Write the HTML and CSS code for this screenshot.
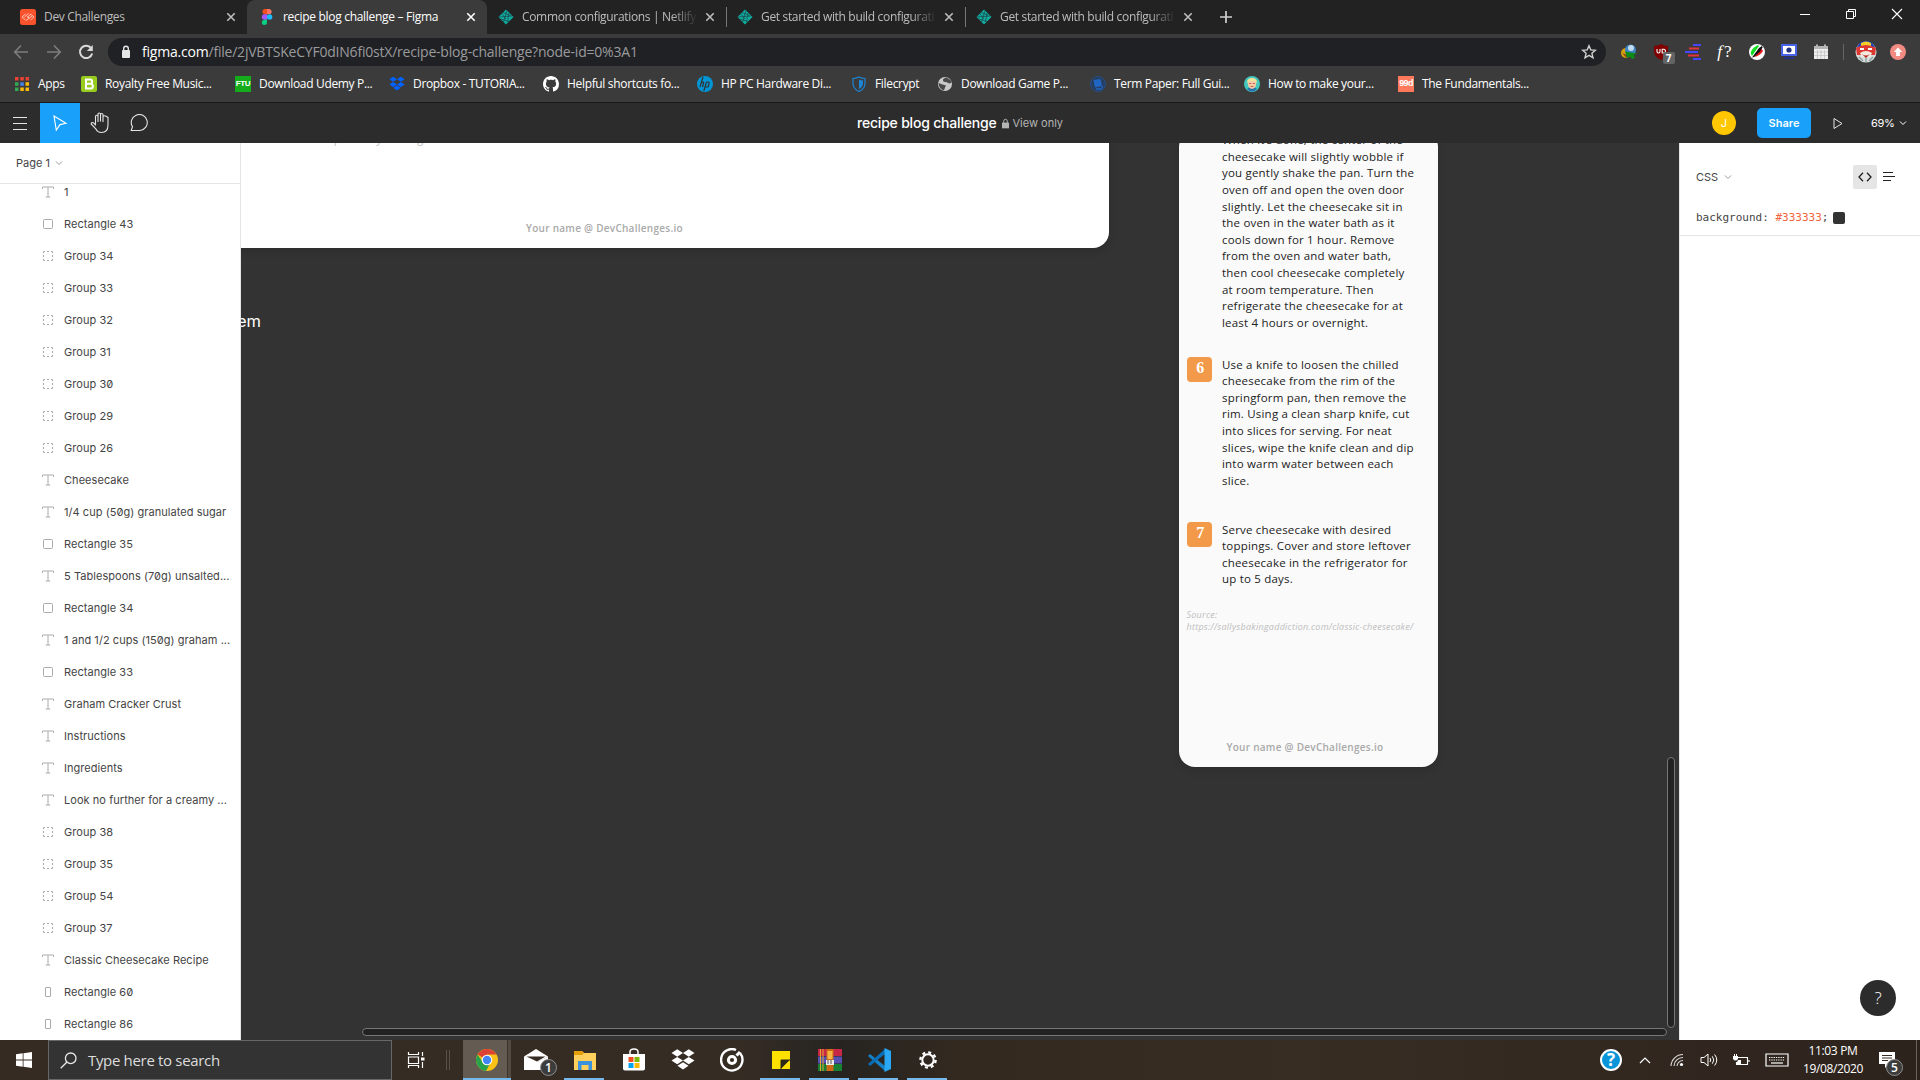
FILE: index.html
```html
<!DOCTYPE html>
<html lang="en">
<head>
<meta charset="utf-8">
<title>recipe blog challenge – Figma</title>
<link rel="stylesheet" href="styles.css">
</head>
<body>
<svg class="defs" aria-hidden="true">
  <symbol id="i-text" viewBox="0 0 12 12"><path d="M.5 3V1h11v2M6 1v10M3.700 11h4.600" fill="none" stroke="#aaa"/></symbol>
  <symbol id="i-rect" viewBox="0 0 12 12"><rect x="1.5" y="1.5" width="9" height="9" rx="1" fill="none" stroke="#aaa"/></symbol>
  <symbol id="i-tall" viewBox="0 0 12 12"><rect x="3.5" y="1.5" width="5" height="9" rx=".5" fill="none" stroke="#aaa"/></symbol>
  <symbol id="i-group" viewBox="0 0 12 12"><path d="M1.500 3V1.500H3M5 1.500h2M9 1.500h1.500V3M10.500 5v2M10.500 9v1.500H9M7 10.500H5M3 10.500H1.500V9M1.500 7V5" fill="none" stroke="#aaa"/></symbol>
  <symbol id="i-chev" viewBox="0 0 8 6"><path d="M1 1.500l3 3 3-3" fill="none" stroke="currentColor"/></symbol>
  <symbol id="i-x" viewBox="0 0 10 10"><path d="M1.300 1.300l7.400 7.400M8.700 1.300L1.300 8.700" stroke="currentColor" stroke-width="1.600"/></symbol>
  <symbol id="i-netlify" viewBox="0 0 16 16"><path d="M8 .5L15.500 8 8 15.500.5 8z" fill="#0fada1"/><path d="M5 3.500l7.500 3M1 8l13-1M3 10l8 2.500M9 1.500L5.500 13M11 4l-1.500 9M4 5l4 5" stroke="#1c4b4d" stroke-width=".8" fill="none"/></symbol>
  <symbol id="i-dropbox" viewBox="0 0 20 18"><path d="M5.200 0l4.800 3.100-4.800 3.100L.4 3.100zM14.800 0l4.800 3.100-4.800 3.100L10 3.100zM5.200 6.400L10 9.500l-4.800 3.100L.4 9.500zM14.800 6.400l4.800 3.100-4.800 3.100L10 9.500zM10 10.800l4.600 3L10 17l-4.600-3.200z" fill="currentColor"/></symbol>
</svg>

<header class="tabs">
  <div class="tab first">
    <svg class="ico" viewBox="0 0 16 16"><rect width="16" height="16" rx="2.500" fill="#f9532d"/><path d="M5.500 5L2 8l3.500 3M10.500 5L14 8l-3.500 3M4.500 8l4-3.500M7 8.500l4-3.500M6 11.500L12 7M7.500 7.500l2 2" fill="none" stroke="#ffc5b4"/></svg>
    <span class="tab-title">Dev Challenges</span><svg class="x"><use href="#i-x"/></svg>
  </div>
  <div class="tab active">
    <svg class="ico fig" viewBox="0 0 12 16"><path d="M6 0H3.500a2.700 2.700 0 000 5.300H6z" fill="#f24e1e"/><path d="M6 0h2.500a2.700 2.700 0 010 5.300H6z" fill="#ff7262"/><path d="M6 5.300H3.500a2.700 2.700 0 000 5.400H6z" fill="#a259ff"/><circle cx="8.600" cy="8" r="2.700" fill="#1abcfe"/><path d="M6 10.700H3.500A2.600 2.600 0 106 13.300z" fill="#0acf83"/></svg>
    <span class="tab-title">recipe blog challenge – Figma</span><svg class="x"><use href="#i-x"/></svg>
  </div>
  <div class="tab"><svg class="ico"><use href="#i-netlify"/></svg><span class="tab-title fade">Common configurations | Netlify</span><svg class="x"><use href="#i-x"/></svg></div>
  <div class="tab sep"><svg class="ico"><use href="#i-netlify"/></svg><span class="tab-title fade">Get started with build configurati</span><svg class="x"><use href="#i-x"/></svg></div>
  <div class="tab sep"><svg class="ico"><use href="#i-netlify"/></svg><span class="tab-title fade">Get started with build configurati</span><svg class="x"><use href="#i-x"/></svg></div>
  <svg class="plus" viewBox="0 0 12 12"><path d="M6 0v12M0 6h12" stroke="#d0d0d0" stroke-width="1.700"/></svg>
  <div class="winctl">
    <svg viewBox="0 0 12 12"><path d="M1 6.500h10" stroke="#fff"/></svg>
    <svg viewBox="0 0 12 12"><path d="M1.500 3.500h7v7h-7zM3.500 3V1.500h7v7H9" fill="none" stroke="#fff"/></svg>
    <svg viewBox="0 0 12 12"><path d="M1 1l10 10M11 1L1 11" stroke="#fff" stroke-width="1.100"/></svg>
  </div>
</header>

<nav class="toolbar">
  <svg class="nav" viewBox="0 0 16 16"><path d="M15 8H2M8 1.500L1.700 8 8 14.500" fill="none" stroke="#7d7d7d" stroke-width="1.600"/></svg>
  <svg class="nav" viewBox="0 0 16 16"><path d="M1 8h13M8 1.500L14.300 8 8 14.500" fill="none" stroke="#7d7d7d" stroke-width="1.600"/></svg>
  <svg class="nav" viewBox="0 0 16 16"><path d="M13.300 4.300A6.200 6.200 0 1014.200 9.500" fill="none" stroke="#d8d8d8" stroke-width="2"/><path d="M14.800 1v6H8.800z" fill="#d8d8d8"/></svg>
  <div class="omni">
    <svg class="lock" viewBox="0 0 10 14"><rect x="1" y="5" width="8" height="8" rx="1" fill="#e6e6e6"/><path d="M2.700 6V3.600a2.300 2.300 0 014.600 0V6" fill="none" stroke="#e6e6e6" stroke-width="1.400"/></svg>
    <span class="url"><b>figma.com</b>/file/2jVBTSKeCYF0dIN6fi0stX/recipe-blog-challenge?node-id=0%3A1</span>
    <svg class="star" viewBox="0 0 16 16"><path d="M8 1.700l1.800 4.200 4.600.4-3.500 3 1.100 4.500L8 11.400l-4 2.400 1.100-4.500-3.500-3 4.600-.4z" fill="none" stroke="#d0d0d0" stroke-width="1.400"/></svg>
  </div>
  <div class="exts">
    <svg viewBox="0 0 18 18"><ellipse cx="6" cy="10" rx="5" ry="5" fill="#d9a20c"/><circle cx="10.500" cy="7" r="5.500" fill="#3e83c4"/><circle cx="11" cy="5" r="3" fill="#c3dcf0"/><path d="M2 9q3 6 7 6l-2-3q-4-1-5-3z" fill="#8c3c20"/><path d="M5 8.500l12 2-3.500 1.500 1.500 3-3 1-2-2.500L7 15z" fill="#0c8d17"/></svg>
    <div class="badged"><svg viewBox="0 0 18 18"><path d="M9 1q3 2 7 2v5q0 6-7 9-7-3-7-9V3q4 0 7-2z" fill="#800000"/><path d="M5 6v2.500q0 1.500 1.500 1.500T8 8.500V6M10.200 6.200H12q1.500.3 1.500 1.900T12 10h-1.800z" fill="none" stroke="#fff" stroke-width="1.100"/></svg><span class="badge">7</span></div>
    <svg viewBox="0 0 18 18"><path d="M9 2h8M1 9h13M9 16h8" stroke="#4646ff" stroke-width="2"/><path d="M5 5.500h10M7 9M4 12.500h11" stroke="#e2333e" stroke-width="2"/></svg>
    <span class="fq"><i>f</i>?</span>
    <svg viewBox="0 0 18 18"><circle cx="9" cy="9" r="8" fill="#fff"/><path d="M3 11q-1-5 7-9l1 1-7 10z" fill="#12dd22"/><path d="M6 14l7-9 2 3q-3 5-9 6z" fill="#ed1a1a"/><path d="M4 14.500l7-9.500 3-2 .5 1.500-2.500 4L6 14z" fill="#111"/></svg>
    <svg viewBox="0 0 18 18"><rect x="2" y="2" width="14" height="10" fill="#fff" stroke="#4863e8" stroke-width="2"/><circle cx="9" cy="7" r="2.600" fill="#203080"/><path d="M4 14h10v2H4z" fill="#24348a"/></svg>
    <svg viewBox="0 0 18 18"><path d="M2 3h14v13H2z" fill="#eee"/><path d="M2 3h14v3H2zM4 1.500h2V4H4zM12 1.500h2V4h-2z" fill="#b5b5b5"/><path d="M2 9h14M2 12.500h14M5.500 7v9M9 7v9M12.500 7v9" stroke="#c4c4c4" stroke-width=".8"/></svg>
  </div>
  <i class="tb-sep"></i>
  <svg class="face" viewBox="0 0 22 22"><circle cx="11" cy="11" r="10.500" fill="#d8dcda"/><path d="M2 8Q3 0 11 0t9 8z" fill="#2445ba"/><path d="M6 2q5-3 10 0v3H6z" fill="#f5cf29"/><path d="M1 7q10-6 20 0l-1 7H2z" fill="#dd3832"/><path d="M5 7h4v2H5zM13 7h4v2h-4z" fill="#fff"/><path d="M5 12q6-4 12 0l-2 4H7z" fill="#f5e8df"/><path d="M7 13q4 3 8 0l-4 4z" fill="#b5221f"/><path d="M4 16l4 4M18 16l-4 4M11 17v4" stroke="#7c9b9b" stroke-width="1.200"/></svg>
  <svg class="upd" viewBox="0 0 16 16"><circle cx="8" cy="8" r="8" fill="#f28b82"/><path d="M8 3.500L12.300 8H9.900v4H6.100V8H3.700z" fill="#fff"/></svg>
</nav>

<nav class="bookmarks">
  <a class="apps-link"><svg class="ico" viewBox="0 0 16 16"><path d="M1 1h3.500v3.500H1zM6.300 1h3.500v3.500H6.300zM11.500 1H15v3.500h-3.500z" fill="#ea4335"/><path d="M1 6.300h3.500v3.500H1z" fill="#34a853"/><path d="M6.300 6.300h3.500v3.500H6.300z" fill="#4285f4"/><path d="M11.500 6.300H15v3.500h-3.500zM11.500 11.500H15V15h-3.500zM6.300 11.500h3.500V15H6.300z" fill="#fbbc05"/><path d="M1 11.500h3.500V15H1z" fill="#34a853"/></svg>Apps</a>
  <a><svg class="ico" viewBox="0 0 16 16"><rect width="16" height="16" rx="2" fill="#97cb1c"/><path d="M5 3.500h4a2 2 0 010 4.300H5zM5 7.800h4.500a2.300 2.300 0 010 4.700H5z" fill="none" stroke="#fff" stroke-width="2"/></svg>Royalty Free Music...</a>
  <a><span class="ico ftu">FTU</span>Download Udemy P...</a>
  <a><svg class="ico dbx"><use href="#i-dropbox"/></svg>Dropbox - TUTORIA...</a>
  <a><svg class="ico" viewBox="0 0 16 16"><path fill="#fff" d="M8 0C3.580 0 0 3.580 0 8c0 3.540 2.290 6.530 5.470 7.590.4.070.55-.17.55-.38 0-.19-.01-.82-.01-1.490-2.010.37-2.530-.49-2.690-.94-.09-.23-.48-.94-.82-1.130-.28-.15-.68-.52-.01-.53.63-.01 1.080.58 1.230.82.72 1.210 1.870.87 2.330.66.07-.52.28-.87.51-1.070-1.780-.2-3.640-.89-3.640-3.950 0-.87.31-1.590.82-2.150-.08-.2-.36-1.020.08-2.120 0 0 .67-.21 2.200.82.64-.18 1.320-.27 2-.27s1.360.09 2 .27c1.530-1.040 2.200-.82 2.200-.82.44 1.100.16 1.920.08 2.120.51.56.82 1.270.82 2.150 0 3.070-1.870 3.750-3.650 3.950.29.25.54.73.54 1.480 0 1.070-.01 1.930-.01 2.200 0 .21.15.46.55.38A8.010 8.010 0 0016 8c0-4.420-3.580-8-8-8z"/></svg>Helpful shortcuts fo...</a>
  <a><svg class="ico" viewBox="0 0 16 16"><circle cx="8" cy="8" r="8" fill="#0096d6"/><path d="M6 1L3 11M3.800 7.500Q7 4.500 6.500 7.500L5.500 11M9.500 6L6.800 15M9.500 6h2q1 0 .5 2t-1 3H8.300" fill="none" stroke="#333" stroke-width="1.200"/></svg>HP PC Hardware Di...</a>
  <a><svg class="ico" viewBox="0 0 16 16"><path d="M8 1q3 1.500 6 1.500V7q0 6-6 8.500Q2 13 2 7V2.500Q5 2.500 8 1z" fill="none" stroke="#1c85d6" stroke-width="1.200"/><path d="M8 3.500q2 1 4 1V7q0 4-4 6z" fill="#1c85d6"/></svg>Filecrypt</a>
  <a><svg class="ico" viewBox="0 0 16 16"><circle cx="8" cy="8" r="7" fill="#c9c9c9"/><path d="M9.500 1.500q-4 1-3.500 3t3 1.500l3.500 1.500q2.500-.5 2-2T9.500 1.500zM1.500 7l4 1.500 3.500 1-1 2-1 3Q2 13 1.500 7z" fill="#4a4a4a"/></svg>Download Game P...</a>
  <a><svg class="ico" viewBox="0 0 16 16"><circle cx="8" cy="8" r="7.500" fill="#263f61" stroke="#235494" stroke-width=".8"/><path d="M3.500 4l7-1 1.500 7-7 1.500z" fill="#2165c5"/><path d="M6 13h5l2-3" fill="none" stroke="#2165c5" stroke-width="1.300"/></svg>Term Paper: Full Gui...</a>
  <a><svg class="ico" viewBox="0 0 16 16"><circle cx="8" cy="8" r="8" fill="#42c7be"/><path d="M3 13q5-5 10 0-5 5-10 0z" fill="#2772ae"/><ellipse cx="8" cy="7.500" rx="4.200" ry="5.300" fill="#f4c9a8"/><path d="M3 7q0-5 5-5t5 5l-3-2H6z" fill="#efe29b"/><path d="M5 7.500h2.300M8.700 7.500H11M6.500 10.500h3" stroke="#c36c53"/></svg>How to make your...</a>
  <a><span class="ico nnd">99d</span>The Fundamentals...</a>
</nav>

<div class="figbar">
  <div class="tools">
    <svg class="burger" viewBox="0 0 14 14"><path d="M0 1.500h14M0 7.500h14M0 13.500h14" stroke="#e5e5e5"/></svg>
    <div class="move"><svg viewBox="0 0 16 16"><path d="M2 1l12 7.300-6 1.300L4.300 15z" fill="none" stroke="#fff" stroke-width="1.100"/></svg></div>
    <svg class="hand" viewBox="0 0 20 22"><path d="M5.500 12.500V4.500q0-1.200 1.200-1.200T8 4.500V10M8 9.500V2.200Q8 1 9.200 1t1.300 1.200V9.500M10.500 9V2.700q0-1.200 1.200-1.200T13 2.700V10M13 9.500V5q0-1.200 1.500-1.200T18 5.500V13q0 7.500-6.500 7.500-4 0-5.500-3.500L1.500 12.500q-.8-1 .3-1.800 1-.6 2 .5l2 2.300" fill="none" stroke="#e5e5e5" stroke-width="1.100"/></svg>
    <svg class="comment" viewBox="0 0 18 18"><path d="M1 17L2.500 12.800A8 8 0 1110 16.500H1.200" fill="none" stroke="#e5e5e5" stroke-width="1.100"/></svg>
  </div>
  <div class="file"><span class="fname">recipe blog challenge</span><svg viewBox="0 0 8 12"><rect y="5" width="8" height="6.500" fill="#b5b5b5"/><path d="M2 5.500V3.200a2 2 0 014 0v2.300" fill="none" stroke="#b5b5b5" stroke-width="1.100"/></svg><span class="view">View only</span></div>
  <div class="figright">
    <span class="avatar">J</span><span class="share">Share</span>
    <svg class="play" viewBox="0 0 10 12"><path d="M1 1l8 5-8 5z" fill="none" stroke="#e5e5e5"/></svg>
    <span class="zoom">69%</span><svg class="chev"><use href="#i-chev"/></svg>
  </div>
</div>

<main class="work">
  <aside class="left">
    <div class="page">Page 1<svg class="chev"><use href="#i-chev"/></svg></div>
    <ul class="layers">
      <li><svg><use href="#i-text"/></svg>1</li>
      <li><svg><use href="#i-rect"/></svg>Rectangle 43</li>
      <li><svg><use href="#i-group"/></svg>Group 34</li>
      <li><svg><use href="#i-group"/></svg>Group 33</li>
      <li><svg><use href="#i-group"/></svg>Group 32</li>
      <li><svg><use href="#i-group"/></svg>Group 31</li>
      <li><svg><use href="#i-group"/></svg>Group 30</li>
      <li><svg><use href="#i-group"/></svg>Group 29</li>
      <li><svg><use href="#i-group"/></svg>Group 26</li>
      <li><svg><use href="#i-text"/></svg>Cheesecake</li>
      <li><svg><use href="#i-text"/></svg>1/4 cup (50g) granulated sugar</li>
      <li><svg><use href="#i-rect"/></svg>Rectangle 35</li>
      <li><svg><use href="#i-text"/></svg>5 Tablespoons (70g) unsalted...</li>
      <li><svg><use href="#i-rect"/></svg>Rectangle 34</li>
      <li><svg><use href="#i-text"/></svg>1 and 1/2 cups (150g) graham ...</li>
      <li><svg><use href="#i-rect"/></svg>Rectangle 33</li>
      <li><svg><use href="#i-text"/></svg>Graham Cracker Crust</li>
      <li><svg><use href="#i-text"/></svg>Instructions</li>
      <li><svg><use href="#i-text"/></svg>Ingredients</li>
      <li><svg><use href="#i-text"/></svg>Look no further for a creamy ...</li>
      <li><svg><use href="#i-group"/></svg>Group 38</li>
      <li><svg><use href="#i-group"/></svg>Group 35</li>
      <li><svg><use href="#i-group"/></svg>Group 54</li>
      <li><svg><use href="#i-group"/></svg>Group 37</li>
      <li><svg><use href="#i-text"/></svg>Classic Cheesecake Recipe</li>
      <li><svg><use href="#i-tall"/></svg>Rectangle 60</li>
      <li><svg><use href="#i-tall"/></svg>Rectangle 86</li>
    </ul>
  </aside>

  <section class="canvas">
    <div class="frame desktop">
      <p class="source wide">Source: https://sallysbakingaddiction.com/classic-cheesecake/</p>
      <p class="credit">Your name @ DevChallenges.io</p>
    </div>
    <div class="label">em</div>
    <div class="frame mobile">
      <div class="step"><span class="num ghost"></span><p>When it’s done, the center of the<br>cheesecake will slightly wobble if<br>you gently shake the pan. Turn the<br>oven off and open the oven door<br>slightly. Let the cheesecake sit in<br>the oven in the water bath as it<br>cools down for 1 hour. Remove<br>from the oven and water bath,<br>then cool cheesecake completely<br>at room temperature. Then<br>refrigerate the cheesecake for at<br>least 4 hours or overnight.</p></div>
      <div class="step"><span class="num">6</span><p>Use a knife to loosen the chilled<br>cheesecake from the rim of the<br>springform pan, then remove the<br>rim. Using a clean sharp knife, cut<br>into slices for serving. For neat<br>slices, wipe the knife clean and dip<br>into warm water between each<br>slice.</p></div>
      <div class="step last"><span class="num">7</span><p>Serve cheesecake with desired<br>toppings. Cover and store leftover<br>cheesecake in the refrigerator for<br>up to 5 days.</p></div>
      <p class="source">Source:<br>https://sallysbakingaddiction.com/classic-cheesecake/</p>
      <p class="credit">Your name @ DevChallenges.io</p>
    </div>
    <i class="scroll v"></i><i class="scroll h"></i>
  </section>

  <aside class="right">
    <div class="css-head"><span>CSS</span><svg class="chev"><use href="#i-chev"/></svg>
      <div class="code-btn"><svg viewBox="0 0 14 10"><path d="M5 .8L1 5l4 4.200M9 .8L13 5 9 9.200" fill="none" stroke="#222" stroke-width="1.300"/></svg></div>
      <svg class="lines" viewBox="0 0 12 10"><path d="M0 .5h10M0 4.500h12M0 8.500h8" stroke="#222"/></svg>
    </div>
    <div class="css-line">background: <em>#333333</em>;<i class="swatch"></i></div>
    <div class="help">?</div>
  </aside>
</main>

<footer class="taskbar">
  <div class="start"><svg viewBox="0 0 16 16"><path d="M0 2.200L6.700 1.300v6.300H0zM7.500 1.200L16 0v7.600H7.500zM0 8.400h6.700v6.300L0 13.800zM7.500 8.400H16V16l-8.500-1.200z" fill="#fff"/></svg></div>
  <div class="search"><svg viewBox="0 0 17 17"><circle cx="10.700" cy="6.300" r="5.300" fill="none" stroke="#e8e8e8" stroke-width="1.300"/><path d="M7 10L.7 16.300" stroke="#e8e8e8" stroke-width="1.300"/></svg>Type here to search</div>
  <div class="tview"><svg viewBox="0 0 18 18"><path d="M1.500 1v2.500h10V1M1.500 17v-2.500h10V17M1.500 6h10v6.500h-10zM15.500 1v4M15.500 11v6" fill="none" stroke="#fff" stroke-width="1.200"/><path d="M14 6.500h3.500v3H14z" fill="#fff"/></svg></div>
  <i class="grip"></i>
  <div class="apps">
    <div class="app on"><svg viewBox="0 0 24 24"><circle cx="12" cy="12" r="11" fill="#fbc116"/><path d="M12 12L2.500 6.500A11 11 0 0121.500 6.500H12z" fill="#dd4335"/><path d="M2.500 6.500A11 11 0 0011 23l4.500-8.500H8z" fill="#2aa14b"/><circle cx="12" cy="12" r="5.300" fill="#fff"/><circle cx="12" cy="12" r="4.200" fill="#4285f4"/></svg></div>
    <div class="app"><svg viewBox="0 0 24 24"><path d="M0 8.500L12 1l12 7.500L12 15z" fill="#fff"/><path d="M0 8.500V22h24V8.500L13 14z" fill="#fff"/><path d="M2.500 8.500h19L13 13.500z" fill="#352b22"/></svg><span class="count">1</span></div>
    <div class="app run"><svg viewBox="0 0 24 24"><path d="M1 3h8l2 2h12v17H1z" fill="#ffd05c"/><path d="M1 3h8l2 2-2 2H1z" fill="#e3a008"/><path d="M5 22v-9h14v9h-3.500v-5h-7v5z" fill="#3a93dc"/></svg></div>
    <div class="app"><svg viewBox="0 0 24 24"><path d="M8 7V4q0-3 4-3t4 3v3" fill="none" stroke="#fff" stroke-width="1.500"/><path d="M1 6h22v14.500q0 2-2 2H3q-2 0-2-2z" fill="#fff"/><path d="M6.500 9H11.500v5H6.500z" fill="#f25022"/><path d="M12.500 9h5v5h-5z" fill="#7fba00"/><path d="M6.500 15h5v5h-5z" fill="#00a4ef"/><path d="M12.500 15h5v5h-5z" fill="#ffb900"/></svg></div>
    <div class="app"><svg class="dropw"><use href="#i-dropbox"/></svg></div>
    <div class="app"><svg viewBox="0 0 24 24"><path d="M20 5a10.700 10.700 0 11-4-3" fill="none" stroke="#fff" stroke-width="2.400"/><circle cx="12" cy="12" r="3.600" fill="none" stroke="#fff" stroke-width="3"/><path d="M16.500 7.500L20 4" stroke="#fff" stroke-width="3"/></svg></div>
    <div class="app run"><svg viewBox="0 0 24 24"><path d="M3 3h18v18H3z" fill="#ffe100"/><path d="M12 12h9l-9 9z" fill="#2d2919"/><path d="M21 12v9h-9z" fill="#ffe100"/><path d="M12 21v-9h9" fill="none" stroke="#2d2919"/></svg></div>
    <div class="app run"><svg viewBox="0 0 24 24"><path d="M0 1h24v7H0z" fill="#c92746"/><path d="M0 8.500h24v7H0z" fill="#5550b4"/><path d="M0 16h24v7H0z" fill="#188135"/><path d="M2.500 1v22M5 1v22" stroke="#e3aa32"/><path d="M8.500 1h7v22h-7z" fill="#ce6a16"/><path d="M9.500 3h5v8h-5z" fill="#f4b545"/><path d="M8 12h8v5H8z" fill="#ececec"/><path d="M10 12v4M13 12v4" stroke="#555"/></svg></div>
    <div class="app run"><svg viewBox="0 0 24 24"><path d="M1 8l2-2 15 12v5z" fill="#1480c8"/><path d="M1 16l2 2L18 6V1z" fill="#0a6db5"/><path d="M17.500 0L24 3v18l-6.500 3z" fill="#2aa8f5"/></svg></div>
    <div class="app run"><svg viewBox="0 0 24 24"><circle cx="12" cy="12" r="5.700" fill="none" stroke="#fff" stroke-width="2"/><circle cx="12" cy="12" r="7.600" fill="none" stroke="#fff" stroke-width="2.400" stroke-dasharray="2.980 2.980"/></svg></div>
  </div>
  <div class="tray">
    <span class="hp">?</span>
    <svg class="up" viewBox="0 0 12 8"><path d="M1 7l5-5 5 5" fill="none" stroke="#fff" stroke-width="1.200"/></svg>
    <svg class="wifi" viewBox="0 0 14 14"><path d="M1 13A12 12 0 0113 1.500M4 13a9 9 0 019-8.500M7 13a6 6 0 016-5.500" fill="none" stroke="#ddd" stroke-width="1.100"/><circle cx="11.500" cy="11.500" r="1.600" fill="#fff"/></svg>
    <svg class="spk" viewBox="0 0 18 14"><path d="M1 4.500h3L8 1v12L4 9.500H1zM10 5q1.500 2 0 4M12.300 3.300q3 3.700 0 7.400M14.600 1.500q4.400 5.500 0 11" fill="none" stroke="#fff"/></svg>
    <svg class="bat" viewBox="0 0 18 14"><path d="M6 4.500h9.500v7H4.500V9M17 7v2" fill="none" stroke="#fff" stroke-width="1.100"/><path d="M1 3h5v3q-2.500 3-5 0zM6 7h3v4H5V9z" fill="#fff"/><path d="M2.500 1v2M4.500 1v2" stroke="#fff"/></svg>
    <svg class="kbd" viewBox="0 0 24 14"><path d="M1 1h22v12H1z" fill="none" stroke="#fff" stroke-width="1.200"/><path d="M4 4.500h16M4 7h16" stroke="#fff" stroke-width="1.200" stroke-dasharray="1.300 1"/><path d="M6 10h12" stroke="#fff" stroke-width="1.200"/></svg>
    <div class="clock"><span>11:03 PM</span><span>19/08/2020</span></div>
    <div class="notif"><svg viewBox="0 0 16 16"><path d="M0 0h16v12H10L6 16v-4H0z" fill="#fff"/><path d="M3 3.500h10M3 6h10M3 8.500h6" stroke="#352b22"/></svg><span class="count">5</span></div>
    <i class="edge"></i>
  </div>
</footer>
</body>
</html>
```
FILE: styles.css
```css
* { box-sizing: border-box; }
body { margin: 0; width: 1920px; height: 1080px; overflow: hidden; display: flex; flex-direction: column; background: #222; font: 12px/16px "Open Sans", "Noto Sans", sans-serif; color: #fff; white-space: nowrap; }
p, ul { margin: 0; padding: 0; list-style: none; }
svg { display: block; flex: none; }
.defs { position: absolute; width: 0; height: 0; }
.ico { width: 16px; height: 16px; flex: none; }
.chev { width: 8px; height: 6px; }

/* Browser tabs */
.tabs { display: flex; height: 34px; flex: none; background: #222; }
.tab { display: flex; align-items: center; width: 239px; padding: 0 11px 0 11px; color: #bdbdbd; letter-spacing: -.33px; }
.tab .x { width: 10px; height: 10px; margin-left: auto; }
.tab-title { margin-left: 8px; }
.fade { width: 178px; mask-image: linear-gradient(90deg, #000 84%, transparent 99%); -webkit-mask-image: linear-gradient(90deg, #000 84%, transparent 99%); }
.first { width: 247px; padding: 0 11px 0 20px; }
.active { width: 240px; padding: 0 11px 0 12px; background: #3b3b3b; border-radius: 8px 8px 0 0; color: #fff; letter-spacing: -.3px; }
.active .tab-title { margin-left: 8px; }
.fig { width: 16px; }
.sep { background: linear-gradient(#777, #777) 0 7px / 1px 20px no-repeat; }
.plus { width: 12px; height: 12px; margin: 11px 0 0 16px; }
.winctl { display: flex; gap: 34px; margin: 8px 17px 0 auto; }
.winctl svg { width: 12px; height: 12px; }

/* Address bar */
.toolbar { display: flex; align-items: center; height: 36px; flex: none; padding-left: 13px; background: #3b3b3b; }
.nav { width: 16px; height: 16px; margin-right: 16.500px; }
.omni { display: flex; align-items: center; width: 1498px; height: 28px; margin-left: -2.500px; padding: 0 9px 0 13px; border-radius: 14px; background: #202124; }
.lock { width: 10px; height: 14px; }
.url { margin-left: 11px; font-size: 14px; color: #9a9b9d; letter-spacing: -.21px; }
.url b { font-weight: 400; color: #fff; }
.star { width: 16px; height: 16px; margin-left: auto; }
.exts { display: flex; align-items: center; gap: 14px; margin-left: 13.500px; }
.exts svg { width: 18px; height: 18px; }
.badged { position: relative; }
.badge { position: absolute; left: 11px; top: 9px; width: 12px; height: 12px; border-radius: 2px; background: #626365; font: 700 10px/12px "Open Sans", sans-serif; text-align: center; }
.fq { width: 18px; font: 17px/18px "Liberation Serif", serif; text-align: center; }
.fq i { margin-right: 2px; }
.tb-sep { width: 1px; height: 16px; margin-left: 13px; background: #666; }
.face { width: 22px; height: 22px; margin-left: 11.500px; }
.upd { width: 16px; height: 16px; margin-left: 13px; }

/* Bookmarks */
.bookmarks { display: grid; grid-template-columns: 66px repeat(5, 154px) 86px 153px 154px 154px 154px; align-items: center; height: 33px; flex: none; padding: 0 0 5px 15px; background: #3b3b3b; border-bottom: 1px solid #191919; letter-spacing: -.33px; }
.bookmarks a { display: flex; align-items: center; gap: 8px; height: 28px; }
.bookmarks .apps-link { margin-left: -1px; }
.dbx { color: #0062ff; }
.ftu { background: #15ac1c; font: 700 8px/16px "Liberation Sans", sans-serif; text-align: center; letter-spacing: -.3px; }
.nnd { background: #ff7a5c; font: 700 9px/15px "Liberation Sans", sans-serif; text-align: center; letter-spacing: -.6px; }

/* Editor header */
.figbar { display: grid; grid-template-columns: 640px 640px 640px; height: 40px; flex: none; background: #2c2c2c; font-family: Inter, sans-serif; }
.tools { display: flex; align-items: center; }
.burger { width: 14px; height: 14px; margin: 0 13px; }
.move { display: grid; place-items: center; width: 40px; height: 40px; background: #18a0fb; }
.move svg { width: 16px; height: 18px; }
.hand { width: 20px; height: 22px; margin-left: 10px; }
.comment { width: 18px; height: 18px; margin-left: 20px; }
.file { display: flex; align-items: center; justify-content: center; }
.fname { font-size: 14px; font-weight: 500; letter-spacing: -.2px; }
.file svg { width: 7px; height: 11px; margin: 0 3px 0 6px; }
.view { font-size: 11px; color: #b5b5b5; }
.figright { display: flex; align-items: center; padding-left: 432px; font-size: 11px; }
.avatar { width: 24px; height: 24px; border-radius: 50%; background: #ffc700; line-height: 24px; text-align: center; }
.share { width: 54px; height: 30px; margin-left: 21px; border-radius: 5px; background: #18a0fb; font-weight: 600; line-height: 30px; text-align: center; }
.play { width: 10px; height: 13px; margin-left: 22px; }
.zoom { margin: 0 4px 0 28px; letter-spacing: -.3px; }

/* Workspace */
.work { display: flex; height: 897px; flex: none; font-family: Inter, sans-serif; font-size: 11px; color: #444; }
.left { width: 241px; height: 897px; overflow: hidden; background: #fff; border-right: 1px solid #e5e5e5; position: relative; z-index: 1; }
.page { display: flex; align-items: center; gap: 5px; height: 41px; padding-left: 16px; border-bottom: 1px solid #e5e5e5; }
.page .chev { color: #999; }
.layers { height: 856px; overflow: hidden; letter-spacing: .05px; }
.layers li { display: flex; align-items: center; gap: 10px; height: 32px; padding-left: 42px; font-feature-settings: "zero"; }
.layers li:first-child { margin-top: -8px; }
.layers svg { width: 12px; height: 12px; }
.canvas { position: relative; width: 1438px; overflow: hidden; background: #333; }
.frame { position: absolute; display: flex; flex-direction: column; font-family: "Open Sans", sans-serif; box-shadow: 0 3px 8px rgba(0, 0, 0, .15); }
.desktop { left: -20px; top: -40px; width: 888px; height: 144.500px; border-radius: 16px; background: #fff; align-items: flex-start; }
.mobile { left: 937.500px; top: -12px; width: 259.500px; height: 636px; border-radius: 16px; background: #fafafa; padding: 1px 8px 0; }
.label { position: absolute; left: -4px; top: 166px; font-size: 16.500px; line-height: 24px; color: #fff; }
.step { display: flex; gap: 10px; height: 224.500px; }
.step p { font-size: 11.500px; line-height: 16.620px; letter-spacing: .2px; color: #222; }
.step + .step { height: 165px; }
.step.last { height: 87px; }
.num { width: 25.500px; height: 25px; border-radius: 4px; background: #f2994a; color: #fff; font: 700 16px/22px "Liberation Serif", serif; text-align: center; padding-left: 2px; flex: none; }
.ghost { visibility: hidden; }
.source { font-size: 9px; line-height: 12.400px; font-style: italic; letter-spacing: .26px; color: #bdbdbd; }
.wide { font-size: 11.500px; line-height: 16px; letter-spacing: .3px; margin: 28px 0 0 56px; }
.credit { font-size: 10px; line-height: 14px; font-weight: 600; letter-spacing: .27px; color: #a9a9a9; }
.mobile .credit { margin: 106.500px 0 0 40px; }
.desktop .credit { margin: 74px 0 0 305px; }
.scroll { position: absolute; border: 1px solid #777; border-radius: 4px; background: #222; }
.v { left: 1426px; top: 614px; width: 8px; height: 271px; }
.h { left: 121px; top: 885px; width: 1305px; height: 8px; }
.right { position: relative; width: 241px; background: #fff; border-left: 1px solid #e5e5e5; }
.css-head { display: flex; align-items: center; height: 68px; padding: 0 25px 0 16px; }
.css-head .chev { margin-left: 6px; color: #999; }
.code-btn { display: grid; place-items: center; width: 24px; height: 24px; margin: 0 6px 0 auto; border-radius: 2px; background: #e5e5e5; }
.code-btn svg { width: 14px; height: 10px; }
.lines { width: 12px; height: 10px; }
.css-line { display: flex; align-items: center; height: 25px; padding: 0 0 11px 16px; border-bottom: 1px solid #e5e5e5; font: 11px/14px "DejaVu Sans Mono", monospace; white-space: pre; }
.css-line em { font-style: normal; color: #f2643d; }
.swatch { width: 12px; height: 12px; margin-left: 5px; border-radius: 2px; background: #333; }
.help { position: absolute; right: 24px; bottom: 24px; width: 36px; height: 36px; border-radius: 50%; background: #2c2c2c; color: #fff; font: 300 17px/36px "Open Sans", sans-serif; text-align: center; }

/* Taskbar */
.taskbar { display: flex; height: 40px; flex: none; background: linear-gradient(90deg, #352b22 0, #352c24 740px, #262421 840px, #33291f 960px, #382d23 1300px, #2d231d 1920px); }
.start { display: grid; place-items: center; width: 48px; }
.start svg { width: 16px; height: 16px; }
.search { display: flex; align-items: center; gap: 11px; width: 344px; padding-left: 11px; border: 1px solid #676767; background: #333; color: #ddd; font-size: 15px; letter-spacing: -.33px; }
.search svg { width: 17px; height: 17px; }
.tview { display: grid; place-items: center; width: 48px; }
.tview svg { width: 18px; height: 18px; }
.grip { width: 4px; height: 20px; margin: 10px 13px 0 6px; border: solid #5a5148; border-width: 0 1px; }
.apps { display: flex; }
.app { position: relative; display: grid; place-items: center; width: 49px; height: 40px; padding-right: 2px; }
.app svg { width: 24px; height: 24px; }
.app .dropw { height: 22px; color: #fff; }
.on { background: linear-gradient(#76b9ed, #76b9ed) 0 38px / 48px 2px no-repeat, linear-gradient(90deg, #645c52 44px, #3a3530 44px, #3a3530 45px, #544c43 45px, #544c43 48px, transparent 48px); }
.run { background: linear-gradient(#76b9ed, #76b9ed) 3px 38px / 40px 2px no-repeat; }
.count { position: absolute; left: 28px; top: 19px; width: 17px; height: 17px; border: 1px solid #8f8f8f; border-radius: 50%; background: #3c3c3c; font: 600 12px/15px "Open Sans", sans-serif; text-align: center; }
.tray { display: flex; align-items: center; margin-left: auto; }
.hp { width: 22px; height: 22px; border: 2px solid #fff; border-radius: 50%; background: #0a95d8; font: 700 17px/18px "Open Sans", sans-serif; text-align: center; }
.up { width: 12px; height: 8px; margin-left: 17px; }
.wifi { width: 14px; height: 14px; margin-left: 19px; }
.spk { width: 18px; height: 14px; margin-left: 16px; }
.bat { width: 18px; height: 14px; margin-left: 14px; }
.kbd { width: 24px; height: 14px; margin-left: 15px; }
.clock { display: flex; flex-direction: column; align-items: center; width: 62px; margin-left: 13px; line-height: 18px; letter-spacing: -.35px; }
.notif { position: relative; width: 16px; height: 16px; margin-left: 15px; }
.notif svg { width: 16px; height: 16px; }
.notif .count { left: 7px; top: 7px; }
.edge { width: 1px; height: 40px; margin: 0 3px 0 21px; background: #6b645e; }
```
